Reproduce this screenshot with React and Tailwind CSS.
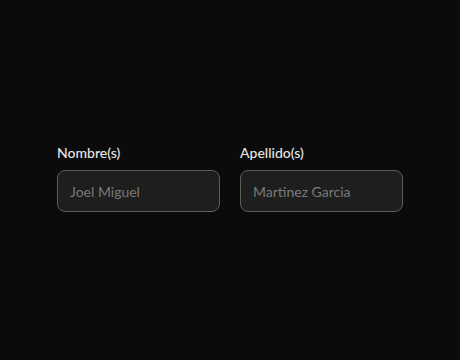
import React from 'react'

const FIELDS = [
  { id: 'nombre', label: 'Nombre(s)', placeholder: 'Joel Miguel' },
  { id: 'apellido', label: 'Apellido(s)', placeholder: 'Martinez Garcia' },
]

export default function App() {
  return (
    <div className="min-h-screen w-full flex items-center justify-center bg-[#0b0b0b] pb-[6px] font-['Lato',sans-serif]">
      <div className="grid grid-cols-2 gap-5 w-[346px]">
        {FIELDS.map(f => (
          <div key={f.id} className="flex flex-col">
            <label htmlFor={f.id} className="text-sm font-medium text-[#e6e6e6] mb-2 leading-5 translate-y-px">
              {f.label}
            </label>
            <input
              id={f.id}
              type="text"
              placeholder={f.placeholder}
              className="h-[42px] w-full rounded-lg border border-[#5c5c5c] bg-[#1e1e1e] px-3 text-sm text-white placeholder:text-[#7a7a7a] outline-none"
            />
          </div>
        ))}
      </div>
    </div>
  )
}
